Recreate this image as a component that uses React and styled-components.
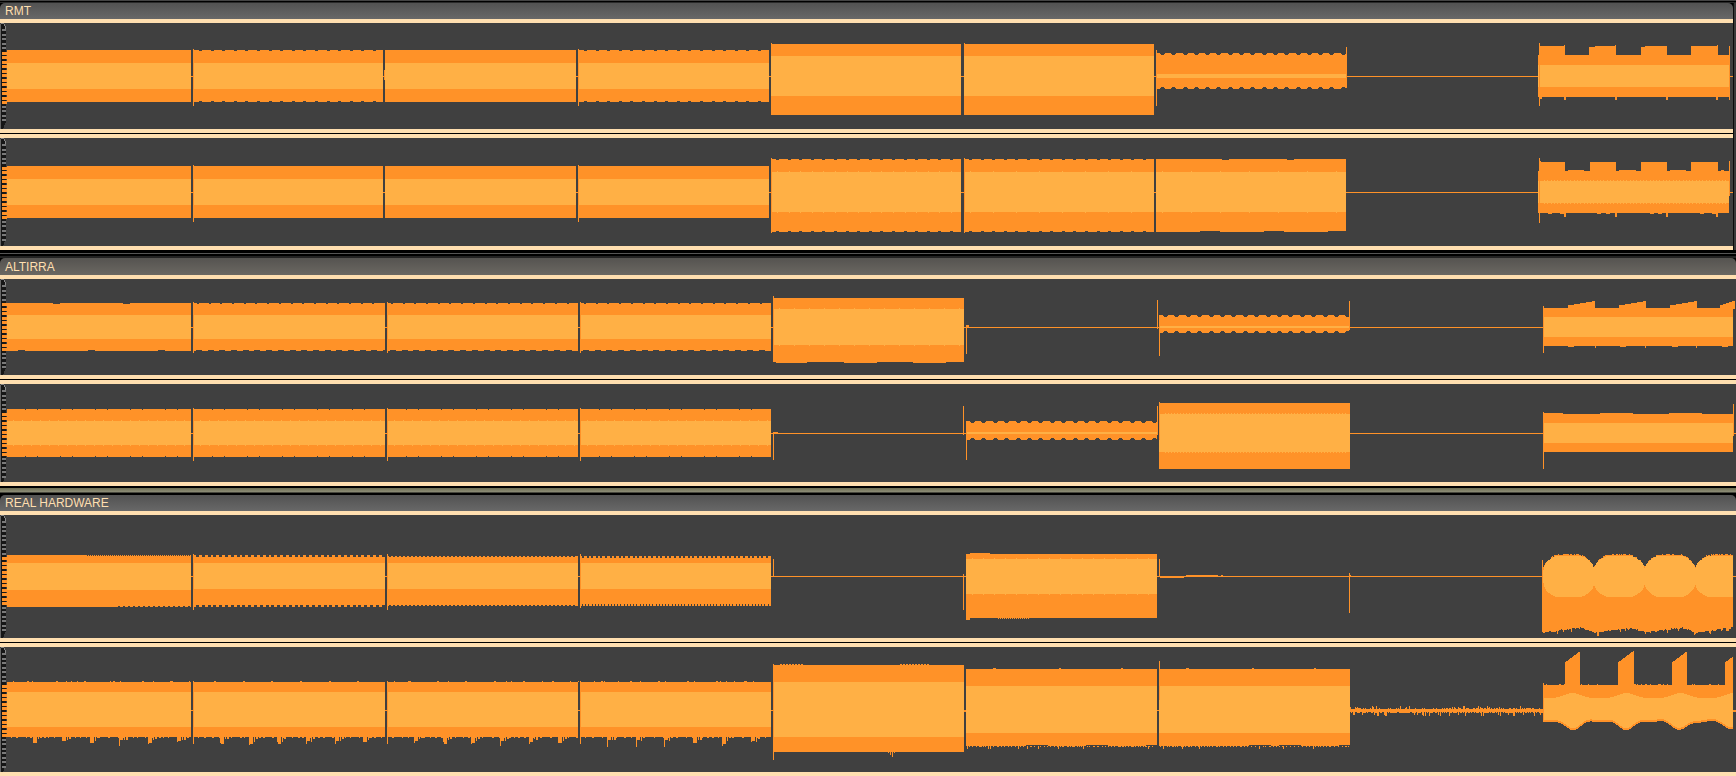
import React from "react";
import styled, { createGlobalStyle } from "styled-components";

const O = "#ff9228";
const I = "#ffb045";
const D = "#404040";

const Global = createGlobalStyle`
  html, body { margin: 0; padding: 0; background: #000; }
  #root { width: 1736px; height: 776px; overflow: hidden; }
`;

const Page = styled.div`
  display: flex;
  flex-direction: column;
  width: 1736px;
  height: 776px;
  overflow: hidden;
  background: #000;
`;
const Panel = styled.section`
  display: flex;
  flex-direction: column;
  background: ${(p) => (p.$inset ? "#3a3a3a" : "#000")};
  padding-right: ${(p) => (p.$inset ? "2px" : "0")};
`;
const Body = styled.div`
  display: flex;
  flex-direction: column;
  background: #000;
  border-right: ${(p) => (p.$inset ? "1px solid #0c0c0c" : "0")};
`;
const Frame = styled.div`
  height: ${(p) => p.$h}px;
  background: ${(p) => p.$bg};
  flex: none;
`;
const Header = styled.header`
  display: flex;
  align-items: center;
  box-sizing: border-box;
  height: ${(p) => p.$h + 4}px;
  padding: 0 0 ${(p) => (p.$h > 16 ? 0 : 1)}px 5px;
  background: linear-gradient(${(p) => p.$from}, ${(p) => p.$to}) padding-box;
  border-bottom: 4px solid #ffdfb0;
  border-radius: 5px 5px 0 0;
`;
const Title = styled.span`
  font: 12px/14px "Liberation Sans", Arial, sans-serif;
  color: #ffdfb0;
`;
const Track = styled.div`
  display: flex;
  height: ${(p) => p.$h}px;
  background: ${D};
`;
const WaveSvg = styled.svg`
  display: block;
  flex: none;
`;
const RulerSvg = styled.svg`
  display: block;
  flex: none;
  width: 7px;
`;
const Divider = styled.div`
  box-sizing: border-box;
  height: 9px;
  background: #000;
  border-top: 4px solid #ffdfb0;
  border-bottom: 4px solid #ffdfb0;
`;
const Cap = styled.div`
  height: 4px;
  background: #ffdfb0;
`;

/* ---------- waveform drawing helpers ---------- */
const rng = (seed) => {
  let s = seed;
  return () => {
    s = (s * 1664525 + 1013904223) % 4294967296;
    return s / 4294967296;
  };
};
const make = (fn) => {
  const r = [];
  const rect = (x, y, w, h, c = O) => r.push({ x, y, w, h, c });
  fn(rect);
  return r;
};
const notches = (rect, x0, x1, y, s) => {
  const from = s.from ?? x0;
  const to = s.to ?? x1;
  for (let x = from + (s.o ?? 4); x < to - 1; x += s.p) {
    rect(Math.round(x), y, s.w, s.d ?? 1, D);
  }
};
const seg = (rect, x0, x1, t, b, it, ib, o = {}) => {
  rect(x0, t, x1 - x0, b - t, O);
  rect(x0, it, x1 - x0, ib - it, I);
  if (o.top) notches(rect, x0, x1, t, o.top);
  if (o.bot) notches(rect, x0, x1, b - (o.bot.d ?? 1), o.bot);
  if (o.ticks) {
    for (let x = x0 + 6; x < x1 - 2; x += o.ticks) {
      rect(Math.round(x), it - 1, 1, 1, I);
      rect(Math.round(x), ib, 1, 1, I);
    }
  }
};
/* rounded ripple: a wide one-pixel notch with a narrower two-pixel notch inside it */
const scallop = (rect, x0, x1, t, b, p) => {
  for (let x = x0 + 4; x < x1 - 2; x += p) {
    const X = Math.round(x);
    rect(X, t, 5, 1, D);
    rect(X + 1, t + 1, 3, 1, D);
    rect(X, b - 1, 5, 1, D);
    rect(X + 1, b - 2, 3, 1, D);
  }
};
const spike = (rect, x, y0, y1, c = O) => rect(x, y0, 1, y1 - y0, c);
const line = (rect, x0, x1, y, h = 1) => rect(x0, y, x1 - x0, h, O);

const dash = { p: 11.6, w: 3, d: 1, o: 5 };

const P1T1 = make((r) => {
  const c = 76;
  seg(r, 7, 191, 50, 102, 63, 89);
  line(r, 191, 193, c);
  spike(r, 193, 49, 106);
  seg(r, 194, 383, 50, 102, 63, 89, { top: dash, bot: dash });
  line(r, 383, 385, c);
  spike(r, 384, 70, 80);
  seg(r, 385, 576, 50, 102, 63, 89);
  line(r, 576, 578, c);
  spike(r, 578, 49, 106);
  seg(r, 579, 769, 50, 102, 63, 89, { top: dash, bot: dash });
  line(r, 769, 771, c);
  seg(r, 771, 961, 44, 115, 56, 96);
  spike(r, 771, 43, 50);
  line(r, 961, 964, c);
  seg(r, 964, 1154, 44, 115, 56, 96);
  spike(r, 964, 43, 50);
  line(r, 1154, 1156, c);
  seg(r, 1156, 1346, 53, 89, 74, 78);
  scallop(r, 1156, 1346, 53, 89, 11.3);
  spike(r, 1156, 50, 106);
  spike(r, 1346, 47, 88);
  line(r, 1346, 1538, c);
  seg(r, 1538, 1729, 55, 97, 65, 87);
  [[1539, 1565], [1589, 1616], [1641, 1667], [1691, 1718]].forEach(([a, b]) => r(a, 46, b - a, 9));
  r(1589, 46, 6, 1, D);
  r(1641, 46, 4, 1, D);
  spike(r, 1539, 43, 106);
  spike(r, 1564, 45, 48);
  spike(r, 1615, 45, 48);
  spike(r, 1717, 45, 48);
  r(1540, 97, 2, 2);
  [1564, 1615, 1666, 1716].forEach((x) => r(x, 97, 2, 3));
  spike(r, 1729, 46, 100);
  line(r, 1729, 1733, c);
});

const P1T2 = make((r) => {
  const c = 192;
  seg(r, 7, 191, 166, 218, 179, 205);
  line(r, 191, 193, c);
  spike(r, 193, 165, 222);
  seg(r, 194, 383, 166, 218, 179, 205);
  line(r, 383, 385, c);
  seg(r, 385, 576, 166, 218, 179, 205);
  line(r, 576, 578, c);
  spike(r, 578, 165, 222);
  seg(r, 579, 769, 166, 218, 179, 205);
  line(r, 769, 771, c);
  seg(r, 771, 961, 159, 232, 172, 212, { top: dash, bot: dash, ticks: 11.6 });
  spike(r, 771, 158, 233);
  line(r, 961, 964, c);
  seg(r, 964, 1154, 159, 232, 172, 212, { top: dash, bot: dash, ticks: 23 });
  spike(r, 964, 158, 233);
  line(r, 1154, 1156, c);
  seg(r, 1156, 1346, 159, 232, 172, 212, {
    top: { p: 65, w: 7, d: 1, o: 66 },
    bot: { p: 64, w: 20, d: 1, o: 44 },
    ticks: 29,
  });
  line(r, 1346, 1538, c);
  seg(r, 1538, 1729, 171, 213, 181, 203, { ticks: 3.3 });
  [[1540, 1565], [1590, 1616], [1641, 1667], [1691, 1718]].forEach(([a, b]) => r(a, 162, b - a, 9));
  r(1540, 161, 1, 2);
  [[1565, 1589], [1616, 1641], [1667, 1691], [1718, 1729]].forEach(([a, b]) => r(a + 3, 170, b - a - 8, 1));
  [1548, 1560, 1597, 1606, 1650, 1658, 1700, 1712].forEach((x) => r(x, 213, 4, 1));
  [1564, 1615, 1666, 1716].forEach((x) => r(x, 213, 2, 4));
  spike(r, 1539, 158, 223);
  spike(r, 1729, 161, 196);
  line(r, 1729, 1733, c);
});

const P2T1 = make((r) => {
  const c = 327;
  const sparseT = { p: 70, w: 7, d: 1, o: 46 };
  const sparseB = { p: 70, w: 7, d: 1, o: 11 };
  const top = { p: 11.7, w: 2, d: 1, o: 3 };
  const bot = { p: 11.7, w: 6, d: 1, o: 2 };
  seg(r, 7, 191, 303, 351, 315, 339, { top: sparseT, bot: sparseB });
  line(r, 191, 193, c);
  spike(r, 193, 302, 353);
  seg(r, 194, 385, 303, 351, 315, 339, { top, bot });
  line(r, 385, 387, c);
  spike(r, 387, 302, 353);
  seg(r, 388, 578, 303, 351, 315, 339, { top, bot });
  line(r, 578, 580, c);
  spike(r, 580, 302, 353);
  seg(r, 581, 771, 303, 351, 315, 339, { top, bot });
  line(r, 771, 773, c);
  seg(r, 773, 964, 298, 362, 309, 345, { ticks: 15 });
  [[776, 807], [844, 877], [913, 946]].forEach(([a, b]) => r(a, 362, b - a, 1));
  spike(r, 773, 296, 362);
  line(r, 964, 1159, c);
  r(966, 325, 3, 2);
  spike(r, 966, 325, 354);
  spike(r, 1157, 300, 329);
  seg(r, 1159, 1349, 315, 333, 326, 328);
  scallop(r, 1159, 1349, 315, 333, 11.4);
  spike(r, 1159, 326, 356);
  spike(r, 1349, 301, 330);
  line(r, 1349, 1543, c);
  seg(r, 1543, 1733, 308, 346, 317, 337);
  [
    [1568, 1595],
    [1619, 1645],
    [1670, 1696],
    [1720, 1733],
  ].forEach(([a, b]) => {
    for (let x = a; x < b; x += 3) {
      const k = Math.round(((x - a) / (b - a)) * 4);
      r(x, 305 - k, 3, 3 + k + 1);
    }
  });
  spike(r, 1543, 306, 353);
  [1568, 1620, 1672, 1722].forEach((x) => r(x, 346, 6, 1));
  [1595, 1645, 1696].forEach((x) => r(x, 346, 1, 2));
});

const P2T2 = make((r) => {
  const c = 433;
  const pair = { p: 35, w: 1, d: 1, o: 18 };
  const pair2 = { p: 35, w: 1, d: 1, o: 30 };
  const mk = (a, b) => {
    seg(r, a, b, 409, 457, 421, 445, { top: pair, bot: pair, ticks: 9 });
    notches(r, a, b, 409, pair2);
    notches(r, a, b, 456, pair2);
  };
  mk(7, 191);
  line(r, 191, 193, c);
  spike(r, 193, 408, 461);
  mk(194, 385);
  line(r, 385, 387, c);
  spike(r, 387, 408, 461);
  mk(388, 578);
  line(r, 578, 580, c);
  spike(r, 580, 408, 461);
  mk(581, 771);
  line(r, 771, 966, c);
  r(773, 432, 5, 1);
  spike(r, 773, 432, 460);
  spike(r, 963, 406, 435);
  seg(r, 966, 1157, 421, 440, 432, 434);
  scallop(r, 966, 1157, 421, 440, 11.4);
  spike(r, 966, 432, 460);
  spike(r, 1157, 406, 435);
  seg(r, 1159, 1350, 403, 469, 414, 452, { ticks: 3 });
  spike(r, 1159, 402, 440);
  line(r, 1350, 1543, c);
  seg(r, 1543, 1733, 414, 452, 423, 443);
  [[1543, 1563], [1600, 1633], [1669, 1702]].forEach(([a, b]) => r(a, 413, b - a, 1));
  spike(r, 1543, 412, 469);
  spike(r, 1733, 404, 436);
  line(r, 1733, 1736, c);
});

const P3T1 = make((r) => {
  const c = 576;
  const t1 = { p: 2, w: 1, d: 1, from: 87, o: 0 };
  const b1 = { p: 5, w: 2, d: 1, from: 118, o: 0 };
  seg(r, 7, 191, 555, 607, 563, 590, { top: t1, bot: b1 });
  line(r, 191, 193, c);
  spike(r, 193, 554, 610);
  const jag = { p: 5.8, w: 3, d: 2, o: 2 };
  seg(r, 194, 385, 555, 607, 563, 589, { top: jag, bot: jag });
  line(r, 385, 387, c);
  spike(r, 387, 554, 610);
  seg(r, 388, 578, 556, 606, 563, 589, {
    top: { p: 4, w: 2, d: 1, o: 1 },
    bot: { p: 4, w: 2, d: 1, o: 1 },
  });
  line(r, 578, 580, c);
  spike(r, 580, 554, 608);
  seg(r, 581, 771, 556, 606, 563, 589, {
    top: { p: 4.6, w: 2, d: 2, o: 1 },
    bot: { p: 3.2, w: 1, d: 2, o: 1 },
  });
  line(r, 771, 966, c);
  spike(r, 773, 559, 577);
  spike(r, 963, 574, 610);
  seg(r, 966, 1157, 554, 618, 559, 594, { ticks: 11 });
  r(970, 553, 20, 1);
  r(966, 618, 4, 2);
  for (let x = 998; x < 1030; x += 2) r(x, 618, 1, 1);
  line(r, 1157, 1543, c);
  spike(r, 1159, 559, 577);
  r(1160, 576, 24, 2);
  r(1186, 575, 32, 2);
  r(1221, 575, 2, 2);
  spike(r, 1349, 573, 613);
  r(1349, 575, 2, 2);
  const n = rng(11);
  for (let x = 1543; x < 1733; x++) {
    const u = ((x - 1543) / 50.6) % 1;
    const e = Math.abs(2 * u - 1);
    const oTop = Math.round(553.5 + Math.pow(e, 3.5) * 13 + n() * 1.6);
    const spikeDown = n() > 0.92 ? 3 : 0;
    const oBot = Math.round(632.5 - 7 * Math.pow(u, 0.8) + (u > 0.75 ? (u - 0.75) * 24 : 0) + n() * 1.5 + spikeDown);
    r(x, oTop, 1, oBot - oTop);
    const h = Math.sqrt(1 - e * e);
    const half = 6 + 16 * h;
    const iT = Math.round(Math.max(556, 576 - half));
    const iB = Math.round(Math.min(597, 577 + half));
    r(x, iT, 1, iB - iT, I);
  }
  spike(r, 1542, 560, 632);
  line(r, 1733, 1736, c);
});

const P3T2 = make((r) => {
  const c = 710;
  const n = rng(37);
  const mk = (a, b, clean) => {
    seg(r, a, b, 682, 737, 692, 727);
    for (let x = a + 20; x < b - 2; x += 28.7) {
      const X = Math.round(x);
      r(X, 681, 2, 1);
      for (let k = -1; k < 3; k++) r(X + k * 3 + 2, 691, 1, 1, O);
      const len = 4 + n() * 7;
      r(X + 6, 737, 1, Math.round(len));
      r(X + 7, 737, 3, 3 + Math.round(n() * 4));
      r(X + 11, 737, 1, 2 + Math.round(n() * 3));
      r(X + 13, 737, 2, 1 + Math.round(n() * 2));
    }
    for (let x = a + 4; x < b - 2; x += 4 + n() * 6) {
      r(Math.round(x), 737, 1 + Math.round(n()), 1);
      if (!clean && n() > 0.6) r(Math.round(x + 2), 681, 1, 1);
    }
  };
  mk(7, 191);
  line(r, 191, 193, c);
  spike(r, 193, 681, 744);
  mk(194, 385, true);
  line(r, 385, 387, c);
  spike(r, 387, 681, 744);
  mk(388, 578);
  line(r, 578, 580, c);
  spike(r, 580, 681, 744);
  mk(581, 771);
  line(r, 771, 773, c);
  seg(r, 773, 964, 665, 752, 682, 737);
  for (let x = 780; x < 802; x += 3) r(x, 664, 2, 1);
  for (let x = 900; x < 928; x += 3) r(x, 664, 2, 1);
  [888, 890, 892, 894].forEach((x, i) => r(x, 752, 1, 1 + (i % 3) * 2));
  spike(r, 773, 664, 760);
  line(r, 964, 966, c, 2);
  const lower = (a, b) => {
    seg(r, a, b, 669, 746, 686, 733);
    [[a + 27, 3], [a + 93, 2], [a + 155, 2]].forEach(([x, w]) => r(x, 668, w, 1));
    for (let x = a + 1; x < b - 1; x += 1 + Math.floor(n() * 4)) {
      r(x, 746, 1, n() > 0.88 ? 3 : 1);
    }
    for (let x = a + 60; x < b - 1; x += 30) r(x, 745, 22, 1, n() > 0.5 ? D : O);
  };
  lower(966, 1157);
  line(r, 1157, 1159, c);
  lower(1159, 1350);
  spike(r, 1159, 661, 700);
  for (let x = 1350; x < 1543; x++) {
    const a = 708 + Math.round(n() * 1.5) - (n() > 0.9 ? 2 : 0);
    const b = 712 + Math.round(n() * 1.2) + (n() > 0.86 ? 3 : 0);
    r(x, a, 1, b - a);
  }
  const centers = [1572, 1626, 1680, 1733];
  const wins = [[1565, 1580], [1618, 1634], [1672, 1687], [1725, 1733]];
  for (let x = 1543; x < 1733; x++) {
    const g = Math.max(...centers.map((k) => Math.exp(-(((x - k) / 11) ** 2))));
    const w = wins.find(([a, b]) => x >= a && x < b);
    const top = w ? Math.round(662 - ((x - w[0]) / 15) * 11) : 685 - (n() > 0.8 ? 1 : 0);
    const iB = Math.round(719.5 + 8 * g + Math.sin((x - 1543) / 4) * 0.8);
    r(x, top, 1, iB + 2 - top);
    const iT = Math.round(698 - 5 * g);
    r(x, iT, 1, iB - iT, I);
  }
  spike(r, 1543, 683, 720);
  line(r, 1733, 1736, c, 2);
});

const panels = [
  {
    title: "RMT",
    inset: true,
    from: "#525252",
    to: "#686868",
    head: 16,
    frame: { h: 3, bg: "linear-gradient(#444 0 1px, #000 1px 2px, #2a2a2a 2px)" },
    tracks: [
      { top: 23, h: 106, band: [50, 102], rects: P1T1 },
      { top: 138, h: 108, band: [166, 218], rects: P1T2 },
    ],
  },
  {
    title: "ALTIRRA",
    from: "#555350",
    to: "#6b6862",
    head: 17,
    frame: { h: 8, bg: "linear-gradient(#000 0 3px, #555 3px 4px, #000 4px 6px, #222 6px)" },
    tracks: [
      { top: 279, h: 96, band: [303, 351], rects: P2T1 },
      { top: 384, h: 98, band: [409, 457], rects: P2T2 },
    ],
  },
  {
    title: "REAL HARDWARE",
    from: "#525252",
    to: "#686868",
    head: 16,
    frame: { h: 9, bg: "linear-gradient(#000 0 2px, #6e6e52 2px, #8d8d78 6px, #000 7px)" },
    tracks: [
      { top: 515, h: 123, band: [555, 607], rects: P3T1 },
      { top: 647, h: 125, band: [682, 737], rects: P3T2 },
    ],
  },
];

const Ruler = ({ h, band }) => {
  const ticks = [];
  for (let y = 6; y < h - 6; y += 4.5) ticks.push(Math.round(y));
  const [a, b] = band;
  return (
    <RulerSvg height={h} viewBox={`0 0 7 ${h}`} shapeRendering="crispEdges">
      <path d={`M1 0H4L6 4V${h - 7}L3 ${h}H0V1Z`} fill="#161616" />
      <path d={`M1 0H4V1H5V3H6V6H5V3H4V1H1Z`} fill="#8a8a8a" />
      <rect x="0" y="1" width="1" height={h - 1} fill="#666" />
      {ticks.map((y) => {
        const inBand = y >= a && y < b;
        return (
          <rect
            key={y}
            x="2"
            y={y}
            width={inBand ? 5 : 4}
            height={inBand ? 3 : 2}
            fill={inBand ? O : "#7a7a7a"}
          />
        );
      })}
    </RulerSvg>
  );
};

const Wave = ({ width, top, h, rects }) => (
  <WaveSvg width={width} height={h} viewBox={`7 ${top} ${width} ${h}`} shapeRendering="crispEdges">
    {rects.map((q, i) => (
      <rect key={i} x={q.x} y={q.y} width={q.w} height={q.h} fill={q.c} />
    ))}
  </WaveSvg>
);

const bandOf = (t, top) => [t.band[0] - top, t.band[1] - top];

export default function App() {
  return (
    <Page>
      <Global />
      {panels.map((p) => {
        const width = (p.inset ? 1733 : 1736) - 7;
        return (
          <React.Fragment key={p.title}>
            <Frame $h={p.frame.h} $bg={p.frame.bg} />
            <Panel $inset={p.inset}>
              <Body $inset={p.inset}>
                <Header $h={p.head} $from={p.from} $to={p.to}>
                  <Title>{p.title}</Title>
                </Header>
                {p.tracks.map((t, i) => (
                  <React.Fragment key={t.top}>
                    {i > 0 && <Divider />}
                    <Track $h={t.h}>
                      <Ruler h={t.h} band={bandOf(t, t.top)} />
                      <Wave width={width} top={t.top} h={t.h} rects={t.rects} />
                    </Track>
                  </React.Fragment>
                ))}
                <Cap />
              </Body>
            </Panel>
          </React.Fragment>
        );
      })}
    </Page>
  );
}
